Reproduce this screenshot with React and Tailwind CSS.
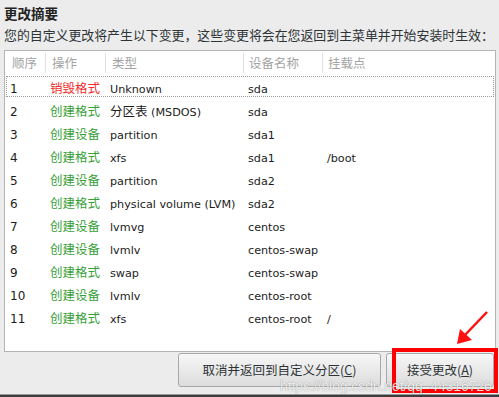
import React from "react";

const rows = [
  ["1", "销毁格式", "red", [["l", "Unknown"]], "sda", ""],
  ["2", "创建格式", "green", [["z", "分区表"], ["l", " (MSDOS)"]], "sda", ""],
  ["3", "创建设备", "green", [["l", "partition"]], "sda1", ""],
  ["4", "创建格式", "green", [["l", "xfs"]], "sda1", "/boot"],
  ["5", "创建设备", "green", [["l", "partition"]], "sda2", ""],
  ["6", "创建格式", "green", [["l", "physical volume (LVM)"]], "sda2", ""],
  ["7", "创建设备", "green", [["l", "lvmvg"]], "centos", ""],
  ["8", "创建设备", "green", [["l", "lvmlv"]], "centos-swap", ""],
  ["9", "创建格式", "green", [["l", "swap"]], "centos-swap", ""],
  ["10", "创建设备", "green", [["l", "lvmlv"]], "centos-root", ""],
  ["11", "创建格式", "green", [["l", "xfs"]], "centos-root", "/"],
];

function Z({ children, className = "" }) {
  return (
    <span className={"font-['Noto_Sans_CJK_SC',sans-serif] text-[12.5px] " + className}>
      {children}
    </span>
  );
}

function L({ children, className = "" }) {
  return (
    <span className={"font-['DejaVu_Sans','Noto_Sans_CJK_SC',sans-serif] text-[11.2px] " + className}>
      {children}
    </span>
  );
}

export default function App() {
  return (
    <div className="relative w-[499px] h-[397px] overflow-hidden bg-[#ececec] flex flex-col text-[#1c1c1c]">
      <div className="pl-[4px] pt-[4px] leading-[18px] font-bold text-[13.5px] font-['Noto_Sans_CJK_SC',sans-serif] text-[#222]">
        更改摘要
      </div>
      <div className="pl-[4px] mt-[4px] leading-[18px] whitespace-nowrap text-[12.9px] font-['Noto_Sans_CJK_SC',sans-serif] text-[#2e3436]">
        您的自定义更改将产生以下变更，这些变更将会在您返回到主菜单并开始安装时生效：
      </div>
      <div className="mt-[6px] mx-[4px] w-[492px] h-[302px] border border-[#b4b4b4] bg-white flex flex-col">
        <div className="grid grid-cols-[40px_60px_138px_79px_1fr] h-[24px] text-[#a3a3a3]">
          <div className="flex items-center pl-[7px]"><Z>顺序</Z></div>
          <div className="flex items-center pl-[6px] my-[2px] border-l border-[#e0e0e0]"><Z>操作</Z></div>
          <div className="flex items-center pl-[6px] my-[2px] border-l border-[#e0e0e0]"><Z>类型</Z></div>
          <div className="flex items-center pl-[5px] my-[2px] border-l border-[#e0e0e0]"><Z>设备名称</Z></div>
          <div className="flex items-center pl-[5px] my-[2px] border-l border-[#e0e0e0]"><Z>挂载点</Z></div>
        </div>
        {rows.map((r, i) => (
          <div
            key={i}
            className={
              "grid grid-cols-[40px_60px_138px_79px_1fr] h-[23px] items-center whitespace-nowrap " +
              (i === 0 ? "outline-1 outline-dotted outline-[#9a9a9a] -outline-offset-2" : "")
            }
          >
            <div className="pl-[5px]"><L className="text-[12px]">{r[0]}</L></div>
            <div className="pl-[5px]">
              <Z className={r[2] === "red" ? "text-[#f02c2c]" : "text-[#37a037]"}>{r[1]}</Z>
            </div>
            <div className="pl-[5px]">
              {r[3].map((p, j) =>
                p[0] === "z" ? <Z key={j}>{p[1]}</Z> : <L key={j}>{p[1]}</L>
              )}
            </div>
            <div className="pl-[5px]"><L>{r[4]}</L></div>
            <div className="pl-[5px]"><L>{r[5]}</L></div>
          </div>
        ))}
      </div>
      <div className="flex justify-end gap-[5px] pr-[5px] mt-[1px] h-[34px]">
        <button className="w-[203px] h-[34px] rounded-[3px] border border-[#a8a8a8] bg-gradient-to-b from-[#f7f7f7] to-[#dcdcdc] text-[#2e3436] flex items-center justify-center">
          <Z>取消并返回到自定义分区(<span className="underline">C</span>)</Z>
        </button>
        <button className="w-[108px] h-[34px] rounded-[3px] border border-[#a8a8a8] bg-gradient-to-b from-[#f7f7f7] to-[#dcdcdc] text-[#2e3436] flex items-center justify-center">
          <Z>接受更改(<span className="underline">A</span>)</Z>
        </button>
      </div>
      <div className="mt-[7px] h-[1px] bg-[#9a9a9a]" />
      <div className="h-[2px] bg-[#3c3c3c]" />

      {/* annotation overlays */}
      <div className="absolute left-[392px] top-[348px] w-[106px] h-[45px] border-4 border-[#ff0000]" />
      <svg className="absolute left-0 top-0" width="499" height="397" viewBox="0 0 499 397">
        <line x1="487" y1="312" x2="464" y2="336" stroke="#ff1010" strokeWidth="2.5" />
        <polygon points="457,344 460,329 472,340" fill="#ff1010" />
      </svg>
      <div className="absolute left-[280px] top-[379px] leading-[16px] text-[13.8px] font-['Liberation_Sans',sans-serif] text-white/85 [text-shadow:0_0_1px_rgba(0,0,0,0.45)] whitespace-nowrap">
        https://blog.csdn.net/qq_44316726
      </div>
    </div>
  );
}
